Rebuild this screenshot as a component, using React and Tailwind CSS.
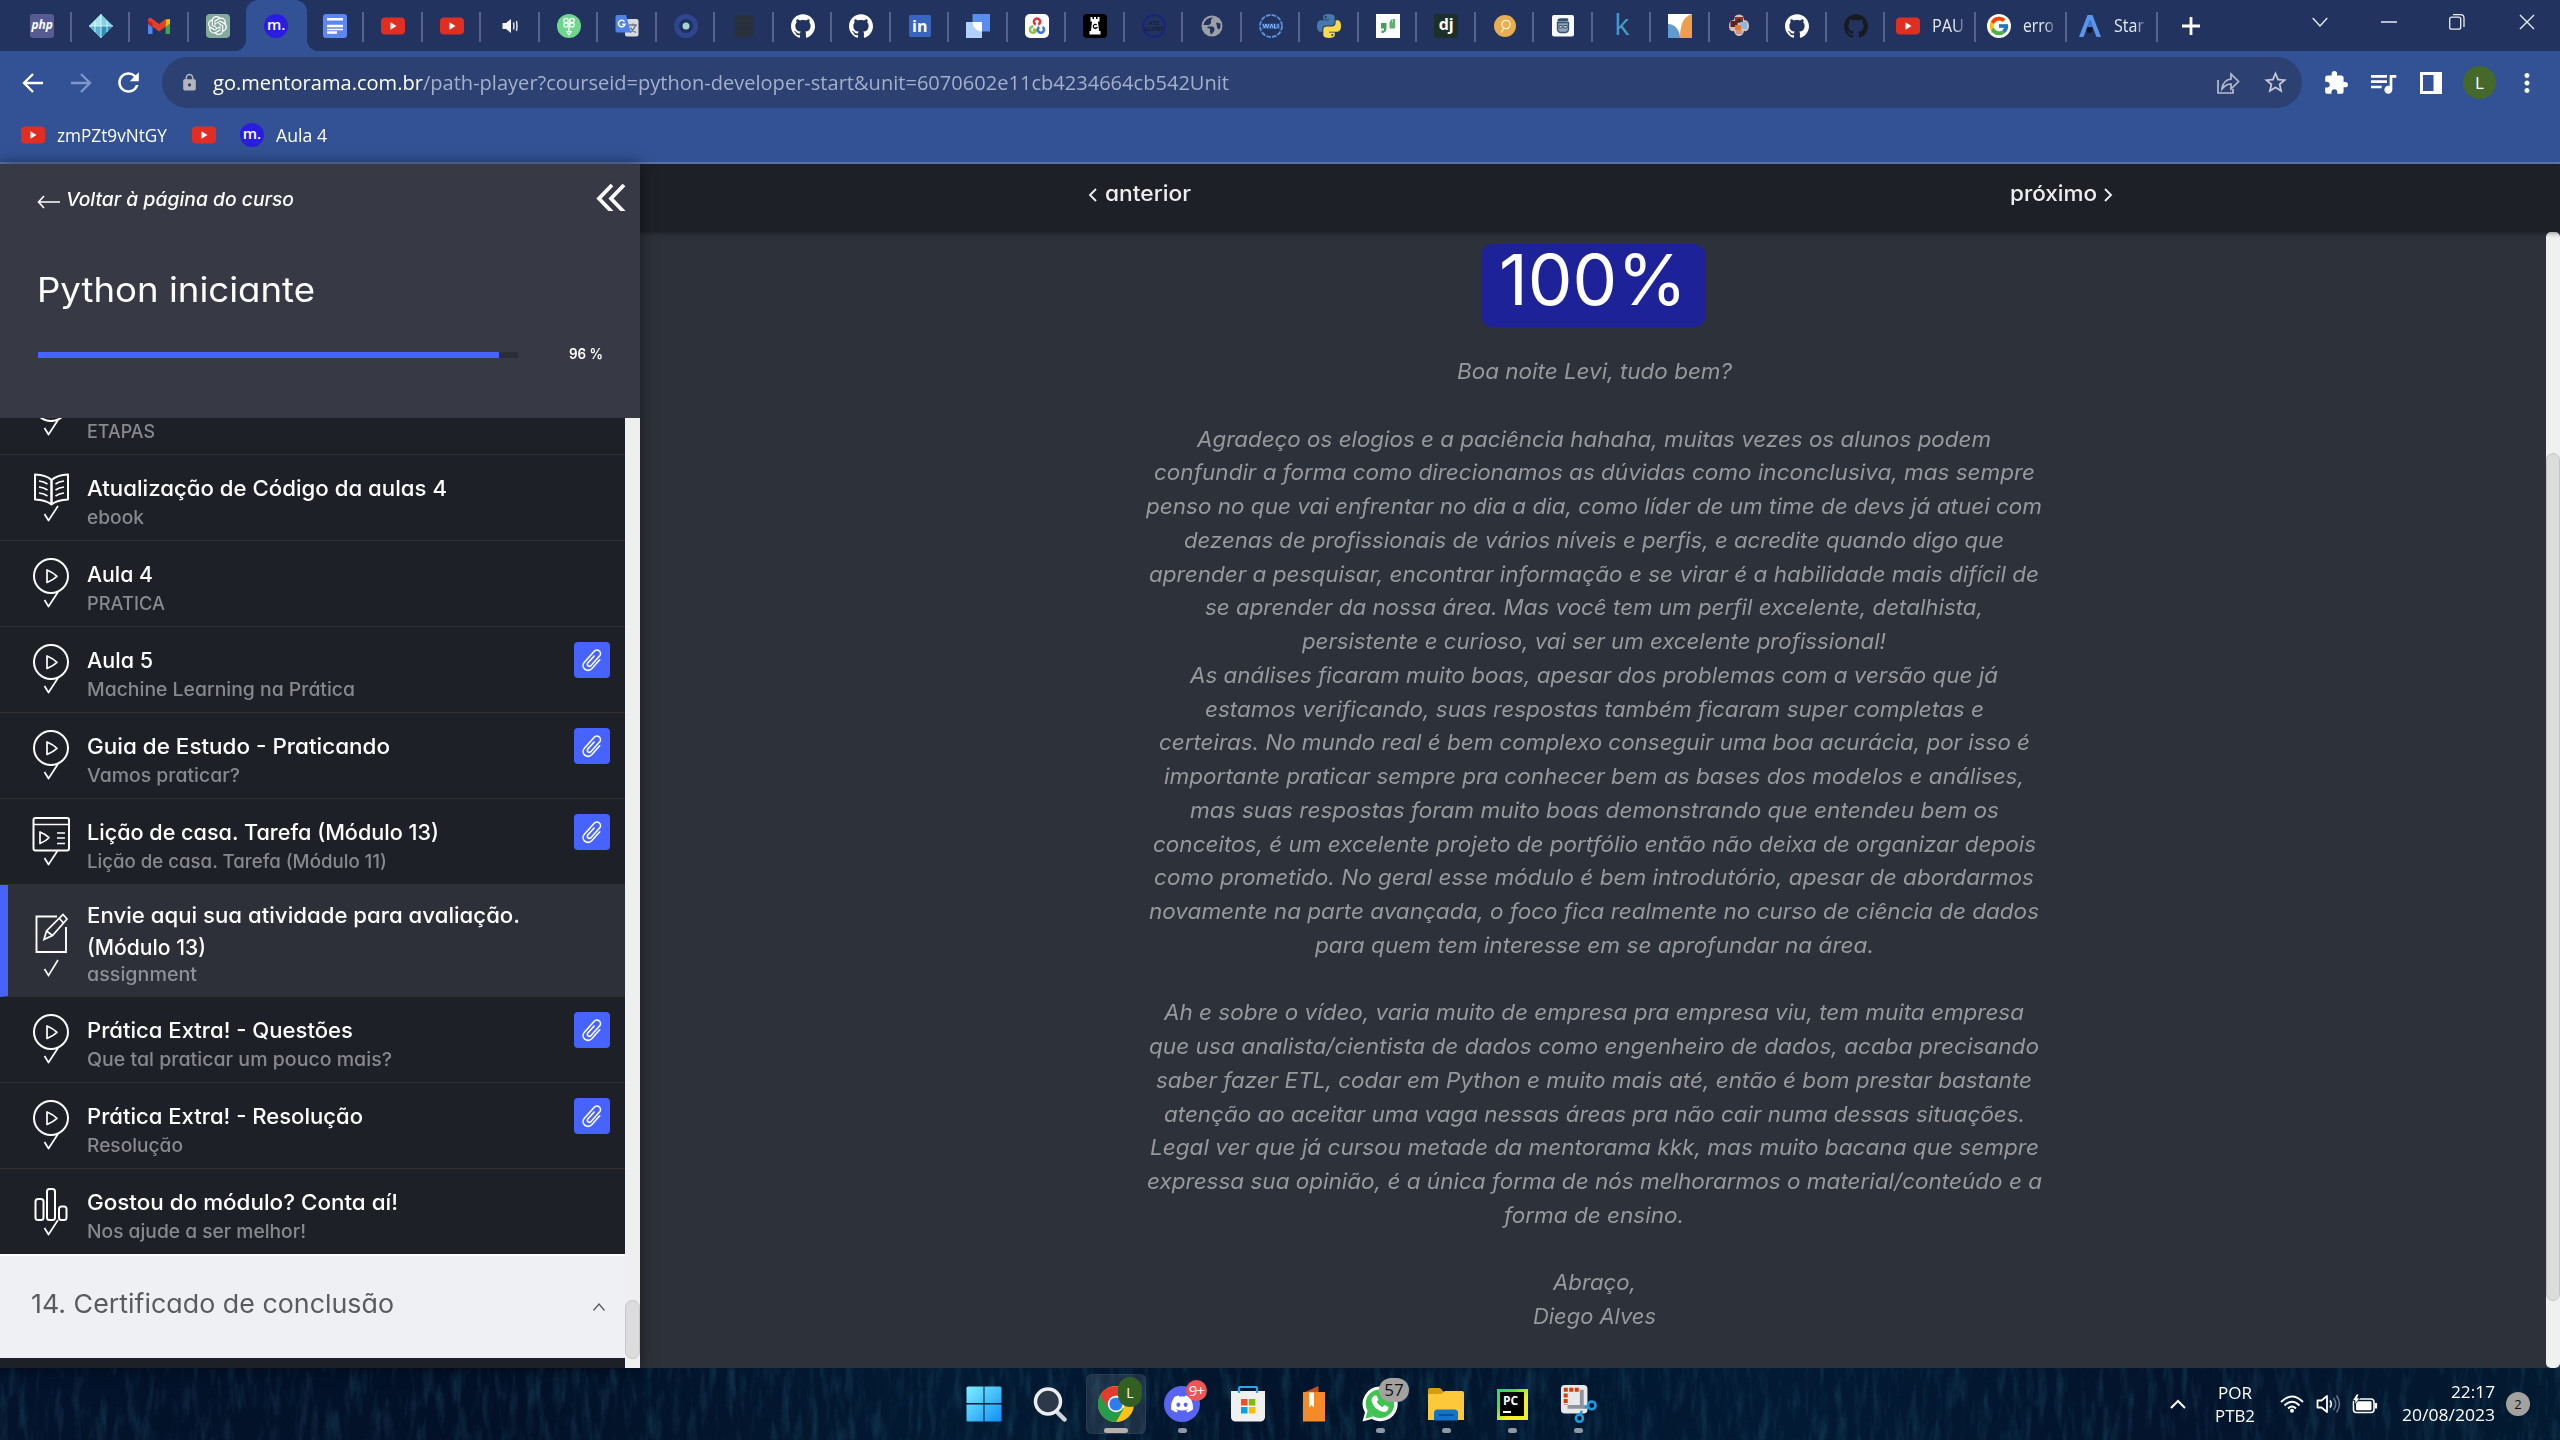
import React, { useLayoutEffect, useRef, useState } from 'react';
import { SiGithub, SiOpenai, SiDiscord } from 'react-icons/si';
import { FcGoogle } from 'react-icons/fc';
import { MdExtension, MdQueueMusic, MdStarBorder, MdLock, MdMoreVert, MdRefresh } from 'react-icons/md';

/* One line of text stretched horizontally to fill a set width. */
function Fit({ w, className = '', children }) {
  const ref = useRef(null);
  const [k, setK] = useState(1);
  useLayoutEffect(() => {
    const el = ref.current;
    el.style.transform = 'none';
    const next = w / el.getBoundingClientRect().width;
    el.style.transform = `scaleX(${next})`;
    setK(next);
  }, [w]);
  return (
    <span className={`block shrink-0 whitespace-nowrap ${className}`} style={{ width: `${w}px` }}>
      <span ref={ref} className="inline-block origin-left align-top" style={{ transform: `scaleX(${k})` }}>
        {children}
      </span>
    </span>
  );
}

function YouTube() {
  return (
    <svg viewBox="0 0 24 24" className="size-6">
      <rect x="0" y="3.5" width="24" height="17" rx="4" fill="#e02f22" />
      <path d="M9.5 8.3v7.4l6-3.7z" fill="#fff" />
    </svg>
  );
}

function MLogo() {
  return (
    <span className="flex size-6 items-center justify-center rounded-full bg-[#2a1de0] font-['Open_Sans',sans-serif] text-[15px] leading-none font-semibold text-white">
      <span className="-mt-[3px]">m.</span>
    </span>
  );
}

const PYTHON_TOP = 'M11.9 0C5.8 0 6.2 2.7 6.2 2.7v2.8H12v.8H3.9S0 5.9 0 12s3.400 5.800 3.400 5.800h2v-2.800s-.1-3.400 3.400-3.400h5.700s3.200 0 3.200-3.200V3.200S18.200 0 11.900 0zM8.700 1.900a1 1 0 1 1 0 2.100 1 1 0 0 1 0-2.100z';

const FAVICONS = [
  <span className="flex size-6 items-center justify-center rounded-[3px] bg-[#565b91] font-['Open_Sans',sans-serif] text-[12px] font-bold text-white italic"><span className="-mt-0.5">php</span></span>,
  <svg viewBox="0 0 24 24" className="size-6">
    <path d="M12 0L24 12 12 24 0 12z" fill="#7fd0e4" />
    <path d="M12 0v24L0 12z" fill="#a8e4ee" />
    <path d="M12 12L24 12 12 24z" fill="#2f8fb5" />
    <path d="M0 12h12v12z" fill="#58b3cf" />
    <path d="M12 0v24M0 12h24M6 7v11M18 7v11" stroke="#e9fbff" strokeWidth=".8" fill="none" />
  </svg>,
  <svg viewBox="0 0 24 24" className="size-6">
    <path d="M1 6v14h4.500V10z" fill="#4c86f0" />
    <path d="M23 6v14h-4.500V10z" fill="#34a853" />
    <path d="M18.500 5.500L23 5v4.500l-4.500 3.500z" fill="#fbbc04" />
    <path d="M1 5.500Q2 2.500 5.500 5L12 10l6.500-5v8L12 17.500 1 9z" fill="#e0412f" />
    <path d="M1 6.500v3.500l4.500 3.500V9z" fill="#c5221f" />
  </svg>,
  <span className="flex size-6 items-center justify-center rounded-[4px] bg-[#84a99d]"><SiOpenai className="size-[19px] text-white" /></span>,
  <MLogo />,
  <svg viewBox="0 0 24 24" className="size-6">
    <rect width="24" height="24" rx="3" fill="#5f86ef" />
    <path d="M4 5.200h16M4 12h16M4 18.500h10" stroke="#fff" strokeWidth="2.600" />
    <path d="M4 15.500h16" stroke="#fff" strokeWidth="1.500" />
  </svg>,
  <YouTube />,
  <YouTube />,
  <svg viewBox="0 0 24 24" className="size-6">
    <path d="M4.500 9h3.500l5-4v14l-5-4H4.500z" fill="#f5f6f8" />
    <path d="M15.500 8.500q1 3.500 0 7M18.500 7q1 5 0 10" stroke="#dfe3ea" strokeWidth="1.500" fill="none" />
  </svg>,
  <svg viewBox="0 0 24 24" className="size-6">
    <circle cx="12" cy="12" r="12" fill="#6fd68d" />
    <g stroke="#fff" fill="none" strokeWidth="1.200">
      <circle cx="9" cy="6.500" r="2.200" /><circle cx="15" cy="6.500" r="2.200" />
      <circle cx="9" cy="11" r="2.200" /><circle cx="15" cy="11" r="2.200" />
      <path d="M12 8v10M10 17.500h4L12 21z" />
    </g>
  </svg>,
  <svg viewBox="0 0 24 24" className="size-6">
    <rect x="10" y="5" width="13.500" height="17.500" rx="2" fill="#d9dade" />
    <path d="M14 11h8M18 9.500v1.500M20.500 11q-1.500 5-5.500 7.500M15.500 13.500q2 4 5.500 5" stroke="#6c7a85" strokeWidth="1.300" fill="none" />
    <path d="M2 1h9l5 17.500H2.500a2 2 0 0 1-2-2v-13.500A2 2 0 0 1 2 1z" fill="#4e82ea" />
    <path d="M9.500 7.700A3.300 3.300 0 1 0 10 10.200H7" stroke="#fff" strokeWidth="1.500" fill="none" />
  </svg>,
  <svg viewBox="0 0 24 24" className="size-6">
    <circle cx="12" cy="12" r="12" fill="#2f4590" /><circle cx="12" cy="12" r="7" fill="#20305d" /><circle cx="12" cy="12" r="3.500" fill="#9fd6d0" />
  </svg>,
  <svg viewBox="0 0 24 24" className="size-6">
    <g fill="#2a303a"><rect x="2.500" y="1.500" width="19" height="5" rx="2.500" /><rect x="2.500" y="7" width="19" height="5" rx="2.500" /><rect x="2.500" y="12.500" width="19" height="5" rx="2.500" /><rect x="2.500" y="18" width="19" height="5" rx="2.500" /></g>
  </svg>,
  <SiGithub className="size-6 text-white" />,
  <SiGithub className="size-6 text-white" />,
  <span className="flex size-[22px] items-center justify-center rounded-[2px] bg-[#3866bd] font-['Open_Sans',sans-serif] text-[16px] leading-none font-bold text-white">in</span>,
  <svg viewBox="0 0 24 24" className="size-6">
    <rect x="6.500" y="0" width="17.500" height="17.500" fill="#5b8def" /><rect x="0" y="8" width="16" height="16" fill="#b0d2fa" /><path d="M6.500 8H16v9.500A9.500 9.500 0 0 1 6.500 8z" fill="#fff" />
  </svg>,
  <svg viewBox="0 0 24 24" className="size-6">
    <rect width="24" height="24" rx="5" fill="#fff" />
    <g fill="none" strokeWidth="2.500">
      <path d="M10.700 10.500a3.100 3.100 0 1 1 2.600 0" stroke="#e0303f" />
      <path d="M8.300 12.500a3.100 3.100 0 1 0 2.800 3.300H8" stroke="#8bc34a" />
      <path d="M14.300 13a3.100 3.100 0 1 0 3.200 0" stroke="#3f6fe8" />
    </g>
  </svg>,
  <svg viewBox="0 0 24 24" className="size-6">
    <rect width="24" height="24" rx="4" fill="#000" />
    <path d="M7.500 3h2v2h1.500V3h2v2h1.500V3h2v4.500h-1.500l1 9.500h1.500v3.500h-11V17H8l1-9.500H7.500z" fill="#fff" />
    <path d="M13.700 11a2 2 0 1 0 .3 2.500h-1.600" stroke="#000" strokeWidth="1.200" fill="none" />
  </svg>,
  <span className="flex size-6 flex-col items-center justify-center rounded-full border-2 border-[#1b2479] font-['Open_Sans',sans-serif] text-[6px] leading-[6px] font-semibold text-[#131b33]"><span>ATS</span><span>GLOBE</span></span>,
  <svg viewBox="0 0 24 24" className="size-6">
    <circle cx="12" cy="12" r="10.500" fill="#9aa0a6" />
    <path d="M13.500 3.500q-3 1.500-2.500 4t-2.500 3.500H3.500a9 9 0 0 1 10-7.500zM8 12.500h4.500q2.500 1 2 3.500t-3.500 4.500q-1.500-2.500-1-4.500t-3-2zM16 8.500l4.500 1q.5 3-1 6-3-1-2.500-3z" fill="#22335f" />
  </svg>,
  <svg viewBox="0 0 24 24" className="size-6">
    <circle cx="12" cy="12" r="11" fill="none" stroke="#5c94dc" strokeWidth="1.800" strokeDasharray="4.500 1.300" />
    <path d="M3 9.500h18v5.500H3z" fill="#2f569c" />
    <path d="M4 10l1.500 4 1.500-4 1.500 4 1.500-4M11 14l1.500-4 1.500 4M15.500 10v4h2M19 10v4" stroke="#8fbcf5" strokeWidth="1" fill="none" />
  </svg>,
  <svg viewBox="0 0 24 24" className="size-6">
    <path d={PYTHON_TOP} fill="#4579ab" />
    <path d={PYTHON_TOP} fill="#f7dc50" transform="rotate(180 12 12)" />
  </svg>,
  <svg viewBox="0 0 24 24" className="size-6">
    <rect width="24" height="24" fill="#fff" />
    <path d="M5 9h5.500v5q0 4-3.500 5H5.500v-2.500H8V14.500H5z" fill="#4a9c5c" />
    <path d="M19 14.500h-5.500v-5q0-3.500 3-4.500v3.500H17V5h2z" fill="#5fb070" />
  </svg>,
  <span className="flex size-6 items-center justify-center rounded-[3px] bg-[#1b3029] font-['Open_Sans',sans-serif] text-[16px] leading-none font-bold text-white"><span className="-mt-1">dj</span></span>,
  <svg viewBox="0 0 24 24" className="size-6">
    <circle cx="12" cy="12" r="11" fill="#e6ae4c" />
    <circle cx="13" cy="10.500" r="4.200" fill="none" stroke="#fdf3df" strokeWidth="1.200" /><path d="M11 14.500L8 18.500" stroke="#fdf3df" strokeWidth="1.200" />
  </svg>,
  <svg viewBox="0 0 24 24" className="size-6">
    <rect x="1" y="1" width="22" height="21.500" rx="2" fill="#f7f9fb" />
    <path d="M6.500 5.500l2-1.200h8l1 1.200-1 2h-10z" fill="#35536f" />
    <path d="M6.500 8.500h11v7q-.5 3-3 3h-5q-2.500 0-3-3z" fill="#8fa5b8" stroke="#35536f" strokeWidth="1.300" />
    <path d="M8 11.500h3.200v2.500H8zM12.800 11.500H16v2.500h-3.200z" stroke="#2d4a68" strokeWidth=".9" fill="#d5e0ea" />
  </svg>,
  <span className="font-['Open_Sans',sans-serif] text-[29px] leading-6 text-[#4a9ac4]"><span className="relative -top-0.5">k</span></span>,
  <svg viewBox="0 0 24 24" className="size-6">
    <rect width="24" height="24" fill="#fff" /><path d="M0 10a12 14 0 0 1 12 14H0z" fill="#5f9bd0" /><path d="M24 0v24H12Q12 3 24 0z" fill="#eb9f4a" />
  </svg>,
  <svg viewBox="0 0 24 24" className="size-6">
    <path d="M8 2q4-3 8 0l1 4q5 0 5 6t-5 5q-1 5-5 5t-5-5q-5 1-5-5t5-6z" fill="#d8c0b4" />
    <rect x="8" y="3" width="8" height="6" fill="#a02c2c" /><rect x="3.500" y="7" width="7" height="6" fill="#5c2326" /><rect x="13" y="8" width="7" height="7" fill="#8fb8e0" /><rect x="8" y="11" width="6" height="5" fill="#e07b35" /><rect x="9" y="16" width="6" height="4" fill="#c9988a" /><rect x="10" y="5" width="4" height="3" fill="#1f3c2c" />
  </svg>,
  <SiGithub className="size-6 text-white" />,
  <SiGithub className="size-6 text-[#161b22]" />,
];

const SEP = 'absolute top-3 right-0 h-[30px] w-0.5 bg-[#56648a]';

function Tabs() {
  return (
    <div className="flex h-[51px] bg-[#22335f] pl-[13px] font-['Open_Sans',sans-serif]">
      {FAVICONS.map((icon, i) => (
        <div key={i} className="relative flex w-[58.5px] shrink-0 items-center justify-center">
          {i === 4 && (
            <div className="absolute inset-x-[-1px] inset-y-0 rounded-t-[12px] bg-[#325295]">
              <div className="absolute bottom-0 -left-3 size-3 bg-[radial-gradient(circle_at_0_0,#22335f_12px,#325295_12.5px)]" />
              <div className="absolute -right-3 bottom-0 size-3 bg-[radial-gradient(circle_at_100%_0,#22335f_12px,#325295_12.5px)]" />
            </div>
          )}
          <div className="relative flex">{icon}</div>
          {i !== 3 && i !== 4 && <div className={SEP} />}
        </div>
      ))}
      {[
        [<YouTube key="y" />, 'PAU', 32],
        [<span key="g" className="flex size-6 items-center justify-center rounded-full bg-white"><FcGoogle className="size-[22px]" /></span>, 'erro', 31],
        [<svg key="a" viewBox="0 0 24 24" className="size-6"><path d="M9.500 1h5L23 23h-4.500L12 6 5.500 23H1z" fill="#5b95ea" /><path d="M12 6l2.500 7h-5z" fill="#3f78dc" /><circle cx="11.500" cy="16" r="3" fill="#101828" /></svg>, 'Star', 30],
      ].map(([icon, label, w]) => (
        <div key={label} className="relative flex w-[91px] shrink-0 items-center gap-3 pl-[11px] text-[18px] text-[#e6eaf3]">
          {icon}
          <div className="[mask-image:linear-gradient(90deg,#000_70%,rgba(0,0,0,0.3))]"><Fit w={w}>{label}</Fit></div>
          <div className={SEP} />
        </div>
      ))}
      <div className="flex w-[66px] items-center justify-center">
        <svg viewBox="0 0 18 18" className="size-[18px]"><path d="M9 0v18M0 9h18" stroke="#fff" strokeWidth="2.800" /></svg>
      </div>
      <div className="ml-auto flex h-11 items-center pr-[25px] text-[#e9edf5]">
        <svg viewBox="0 0 16 10" className="h-[10px] w-4"><path d="M.7 1L8 9l7.300-8" stroke="currentColor" strokeWidth="1.300" fill="none" /></svg>
        <svg viewBox="0 0 16 16" className="ml-[53px] size-4"><path d="M0 8h16" stroke="currentColor" strokeWidth="1.500" /></svg>
        <svg viewBox="0 0 18 18" className="ml-[51px] size-[18px]"><rect x="1.700" y="4.200" width="11" height="12" rx="2" stroke="currentColor" strokeWidth="1.300" fill="none" /><path d="M5 1.700h7.500q3.500 0 3.500 3.500V14" stroke="currentColor" strokeWidth="1.300" fill="none" /></svg>
        <svg viewBox="0 0 16 16" className="ml-[53px] size-[16px]"><path d="M1 1l14 14M15 1L1 15" stroke="currentColor" strokeWidth="1.400" /></svg>
      </div>
    </div>
  );
}

function Toolbar() {
  return (
    <div className="flex h-[63px] items-center bg-[#325295] pl-[21px] font-['Open_Sans',sans-serif]">
      <svg viewBox="0 0 24 24" className="size-6 text-white"><path d="M22 12H3M12 3l-9 9 9 9" stroke="currentColor" strokeWidth="2.400" fill="none" /></svg>
      <svg viewBox="0 0 24 24" className="ml-6 size-6 text-[#7e96c8]"><path d="M2 12h19M12 3l9 9-9 9" stroke="currentColor" strokeWidth="2.400" fill="none" /></svg>
      <MdRefresh className="ml-[20px] size-[31px] text-white" />
      <div className="ml-[18px] flex h-[51px] w-[2140px] items-center rounded-full bg-[#2c4172] pl-[18px]">
        <MdLock className="size-[19px] text-[#b3b6bd]" />
        <div className="ml-[14px] text-[20px] leading-7 text-[#a4b0ca]">
          <Fit w={1016}>
            <span className="text-white">go.mentorama.com.br</span>/path-player?courseid=python-developer-start&amp;unit=6070602e11cb4234664cb542Unit
          </Fit>
        </div>
        <svg viewBox="0 0 24 24" className="mr-[22px] ml-auto size-6 text-[#b6bccb]"><path d="M2 9v13h15v-4M6 18q1-9 9-10V3l7.500 7.500L15 18v-5q-5 0-9 5z" stroke="currentColor" strokeWidth="1.700" fill="none" /></svg>
        <MdStarBorder className="mr-[13px] size-[27px] text-[#c3c8d4]" />
      </div>
      <MdExtension className="ml-[21px] size-[26px] text-white" />
      <MdQueueMusic className="ml-[18px] size-[32px] text-white" />
      <svg viewBox="0 0 22 22" className="ml-[21px] size-[22px]"><path d="M1.500 1.500h19v19h-19z" stroke="#fff" strokeWidth="3" fill="none" /><path d="M13.500 1h7v20h-7z" fill="#fff" /></svg>
      <span className="ml-[21px] flex size-[33px] items-center justify-center rounded-full bg-[#44692a] text-[17px] text-white">L</span>
      <MdMoreVert className="ml-[16px] size-[30px] text-white" />
    </div>
  );
}

function Bookmarks() {
  return (
    <div className="flex h-[50px] items-center border-b-2 border-[#5a78b0] bg-[#325295] pb-[6px] pl-[21px] font-['Open_Sans',sans-serif] text-[18px] leading-6 text-white">
      <YouTube />
      <Fit w={110} className="ml-3">zmPZt9vNtGY</Fit>
      <div className="ml-[25px]"><YouTube /></div>
      <div className="ml-6"><MLogo /></div>
      <Fit w={51} className="ml-3">Aula 4</Fit>
    </div>
  );
}

const CHECK = <path d="M15.500 59l4 6.500L29 51" strokeWidth="1.700" />;

const ITEM_ICONS = {
  play: (
    <>
      <circle cx="22" cy="35" r="17" />
      <path d="M18 29v12.500q6-2.500 10-6.200-4-3.800-10-6.300z" strokeWidth="1.700" />
      {CHECK}
    </>
  ),
  book: (
    <>
      <path d="M22.500 25q-5-5-16.500-5.500v25q11 .5 16.500 5 5.500-4.500 16.500-5v-25Q28 20 22.500 25zv24" />
      <path d="M22.500 25v24" />
      <path d="M10 26q5 .5 8.500 3M10 32q5 .5 8.500 3M10 38q5 .5 8.500 3M35 26q-5 .5-8.500 3M35 32q-5 .5-8.500 3M35 38q-5 .5-8.500 3" strokeWidth="1.600" />
      {CHECK}
    </>
  ),
  lesson: (
    <>
      <rect x="4.500" y="19" width="35.500" height="32.500" rx="2" />
      <path d="M4.500 25.500H40" strokeWidth="1.600" />
      <path d="M11 33v11.500q6-2.500 9-5.800-3-3.200-9-5.700zM28 34h8M28 39h8M28 44.500h8" strokeWidth="1.700" />
      {CHECK}
    </>
  ),
  bars: (
    <>
      <rect x="6.500" y="30" width="8" height="21" rx="2.500" />
      <rect x="18" y="20" width="8" height="31" rx="2.500" />
      <rect x="30" y="37.500" width="7.500" height="13.500" rx="2.500" />
      {CHECK}
    </>
  ),
};

function ItemIcon({ kind }) {
  return (
    <svg viewBox="0 0 44 85" className="ml-[29px] h-[85px] w-11 shrink-0" fill="none" stroke="#fff" strokeWidth="2" strokeLinejoin="round">
      {ITEM_ICONS[kind]}
    </svg>
  );
}

function Clip() {
  return (
    <div className="mt-[15px] mr-[15px] ml-auto flex size-9 items-center justify-center rounded bg-[#4763ff]">
      <svg viewBox="-14 -14 28 28" className="size-[25px]" fill="none" stroke="#fff" strokeWidth="1.800" strokeLinecap="round">
        <path transform="rotate(42)" d="M5.500 -6V7.500A5.500 5.500 0 0 1 -5.500 7.500V-9A4 4 0 0 1 2.500 -9V6A2.300 2.300 0 0 1 -2 6V-5" />
      </svg>
    </div>
  );
}

function Item({ kind, title, tw, sub, sw, clip, first }) {
  return (
    <div className={`flex h-[86px] shrink-0 border-b border-[#313131] bg-[#1e2028] ${first ? '-mt-[49px]' : ''}`}>
      <ItemIcon kind={kind} />
      <div className="ml-[14px] flex flex-col pt-[17px]">
        <div className="h-8 text-[22px] leading-8 font-medium text-white">{title && <Fit w={tw}>{title}</Fit>}</div>
        <div className="text-[18.500px] leading-[26px] font-medium text-[#88898d]"><Fit w={sw}>{sub}</Fit></div>
      </div>
      {clip && <Clip />}
    </div>
  );
}

function Sidebar() {
  return (
    <aside className="relative z-10 flex w-[640px] shrink-0 flex-col shadow-[0_0_14px_rgba(0,0,0,0.5)]">
      <div className="h-[254px] shrink-0 bg-[#373a44]">
        <div className="flex h-[74px] items-center pl-[37px] text-white">
          <svg viewBox="0 0 23 14" className="mt-[2px] h-[14px] w-[23px]"><path d="M23 7H1.500M7 1L1.500 7 7 13" stroke="#fff" strokeWidth="1.600" fill="none" /></svg>
          <Fit w={228} className="-mt-[5px] ml-[6px] text-[18.500px] leading-6 font-medium italic">Voltar à página do curso</Fit>
          <svg viewBox="0 0 30 30" className="mr-[14px] ml-auto size-[30px] -translate-y-[5px]"><g transform="translate(0 2.500)"><path d="M16 1.500L3 15l13 13.500M28 1.500L15 15l13 13.500" stroke="#fff" strokeWidth="3.800" fill="none" /></g></svg>
        </div>
        <h1 className="mt-[29px] pl-[37px] text-[34px] leading-[46px] text-white"><Fit w={278}>Python iniciante</Fit></h1>
        <div className="mt-[33px] flex items-center pl-[38px]">
          <div className="h-1.5 w-[480px] bg-[#2b2d37]"><div className="h-full w-[461px] bg-[#4763ff]" /></div>
          <Fit w={34} className="-mt-0.5 ml-[51px] text-[14.500px] leading-5 font-semibold text-white">96 %</Fit>
        </div>
      </div>
      <div className="flex min-h-0 flex-1">
        <div className="flex w-[625px] flex-col overflow-hidden bg-[#1e2028]">
          <Item first kind="play" sub="ETAPAS" sw={68} />
          <Item kind="book" title="Atualização de Código da aulas 4" tw={360} sub="ebook" sw={57} />
          <Item kind="play" title="Aula 4" tw={66} sub="PRATICA" sw={78} />
          <Item kind="play" title="Aula 5" tw={66} sub="Machine Learning na Prática" sw={268} clip />
          <Item kind="play" title="Guia de Estudo - Praticando" tw={303} sub="Vamos praticar?" sw={153} clip />
          <Item kind="lesson" title="Lição de casa. Tarefa (Módulo 13)" tw={352} sub="Lição de casa. Tarefa (Módulo 11)" sw={300} clip />
          <div className="flex h-[112px] shrink-0 border-b border-l-8 border-b-[#313131] border-l-[#4763ff] bg-[#2d3039]">
            <svg viewBox="0 0 44 111" className="ml-[21px] h-[111px] w-11 shrink-0" fill="none" stroke="#fff" strokeWidth="1.900">
              <path d="M28 31.500H7.500V67H37V42" />
              <path d="M34 29.500l4 4.500-14.500 16.500-8.500 4 2.500-8.500zM30.500 33.500l4 4.500M17.500 46l6 4.500" strokeWidth="1.700" />
              <path d="M15.500 84l4 6.500L29 75" strokeWidth="1.700" />
            </svg>
            <div className="ml-[14px] flex flex-col pt-[14px] text-[22px] leading-8 font-medium text-white">
              <Fit w={433}>Envie aqui sua atividade para avaliação.</Fit>
              <Fit w={119}>(Módulo 13)</Fit>
              <div className="text-[18.500px] leading-[22px] text-[#8e9096]"><Fit w={110}>assignment</Fit></div>
            </div>
          </div>
          <Item kind="play" title="Prática Extra! - Questões" tw={266} sub="Que tal praticar um pouco mais?" sw={305} clip />
          <Item kind="play" title="Prática Extra! - Resolução" tw={276} sub="Resolução" sw={96} clip />
          <Item kind="bars" title="Gostou do módulo? Conta aí!" tw={311} sub="Nos ajude a ser melhor!" sw={219} />
          <div className="-mt-px flex h-[104px] shrink-0 items-center border-t-2 border-white bg-[#eff0f4] pr-5 pl-[31px] text-[26px] leading-9 text-[#5a5b5e]">
            <Fit w={363} className="-mt-[7px]">14. Certificado de conclusão</Fit>
            <svg viewBox="0 0 12 8" className="ml-auto h-2 w-3"><path d="M.5 7.500L6 1l5.500 6.500" stroke="#55565a" strokeWidth="1.200" fill="none" /></svg>
          </div>
        </div>
        <div className="flex w-[15px] flex-col justify-end bg-[#efefef] pb-[9px]">
          <div className="h-[59px] rounded-full border border-[#c6c6c6] bg-[#dcdcdc]" />
        </div>
      </div>
    </aside>
  );
}

const LINES = [
  ['Boa noite Levi, tudo bem?', 275],
  null,
  ['Agradeço os elogios e a paciência hahaha, muitas vezes os alunos podem', 794],
  ['confundir a forma como direcionamos as dúvidas como inconclusiva, mas sempre', 881],
  ['penso no que vai enfrentar no dia a dia, como líder de um time de devs já atuei com', 896],
  ['dezenas de profissionais de vários níveis e perfis, e acredite quando digo que', 820],
  ['aprender a pesquisar, encontrar informação e se virar é a habilidade mais difícil de', 890],
  ['se aprender da nossa área. Mas você tem um perfil excelente, detalhista,', 778],
  ['persistente e curioso, vai ser um excelente profissional!', 584],
  ['As análises ficaram muito boas, apesar dos problemas com a versão que já', 808],
  ['estamos verificando, suas respostas também ficaram super completas e', 779],
  ['certeiras. No mundo real é bem complexo conseguir uma boa acurácia, por isso é', 871],
  ['importante praticar sempre pra conhecer bem as bases dos modelos e análises,', 860],
  ['mas suas respostas foram muito boas demonstrando que entendeu bem os', 809],
  ['conceitos, é um excelente projeto de portfólio então não deixa de organizar depois', 883],
  ['como prometido. No geral esse módulo é bem introdutório, apesar de abordarmos', 880],
  ['novamente na parte avançada, o foco fica realmente no curso de ciência de dados', 890],
  ['para quem tem interesse em se aprofundar na área.', 559],
  null,
  ['Ah e sobre o vídeo, varia muito de empresa pra empresa viu, tem muita empresa', 860],
  ['que usa analista/cientista de dados como engenheiro de dados, acaba precisando', 890],
  ['saber fazer ETL, codar em Python e muito mais até, então é bom prestar bastante', 876],
  ['atenção ao aceitar uma vaga nessas áreas pra não cair numa dessas situações.', 861],
  ['Legal ver que já cursou metade da mentorama kkk, mas muito bacana que sempre', 889],
  ['expressa sua opinião, é a única forma de nós melhorarmos o material/conteúdo e a', 895],
  ['forma de ensino.', 180],
  null,
  ['Abraço,', 83],
  ['Diego Alves', 123],
];

function Main() {
  return (
    <main className="flex min-w-0 flex-1 flex-col bg-[#2d3139]">
      <nav className="relative flex h-[68px] shrink-0 items-start justify-between bg-[#1e2028] pt-[14px] pr-[447px] pl-[448px] text-[21px] leading-8 font-medium text-[#eeeef0] shadow-[0_2px_4px_rgba(0,0,0,0.3)]">
        <div className="flex items-center gap-[8px]">
          <svg viewBox="0 0 9 14" className="mt-0.5 h-[14px] w-[9px]"><path d="M8 1L2 7l6 6" stroke="currentColor" strokeWidth="1.900" fill="none" /></svg>
          <Fit w={86}>anterior</Fit>
        </div>
        <div className="flex items-center gap-[7px]">
          <Fit w={87}>próximo</Fit>
          <svg viewBox="0 0 9 14" className="mt-0.5 h-[14px] w-[9px]"><path d="M1 1l6 6-6 6" stroke="currentColor" strokeWidth="1.900" fill="none" /></svg>
        </div>
      </nav>
      <div className="flex min-h-0 flex-1">
        <div className="flex flex-1 flex-col items-center pt-[12px]">
          <div className="flex h-[83px] w-[225px] justify-center rounded-[12px] bg-[#1e2299] text-[70px] leading-[72px] text-white">
            <Fit w={188}>100%</Fit>
          </div>
          <div className="mt-[28px] flex flex-col items-center pl-0.5 text-[21.500px] leading-[33.760px] text-[#98999c] italic">
            {LINES.map((l, i) => (
              <div key={i} className="h-[33.760px]">{l && <Fit w={l[1]}>{l[0]}</Fit>}</div>
            ))}
          </div>
        </div>
        <div className="w-[14px] overflow-hidden rounded-[5px] bg-[#f0f0f0] pt-[221px]">
          <div className="h-[848px] rounded-[7px] border border-[#c4c4c4] bg-[#dcdcdc]" />
        </div>
      </div>
    </main>
  );
}

const TASKS = [
  { icon: <svg viewBox="0 0 36 36" className="size-9"><defs><linearGradient id="win" x1="0" y1="0" x2="1" y2="1"><stop stopColor="#7ff0ff" /><stop offset="1" stopColor="#0d8ef8" /></linearGradient></defs><path d="M2 .5h15.500V17H.5V2A1.500 1.500 0 0 1 2 .5zM18.500.5H34A1.500 1.500 0 0 1 35.500 2v15h-17zM.5 18.500h17v17H2A1.500 1.500 0 0 1 .5 34zM18.500 18.500h17V34a1.500 1.500 0 0 1-1.500 1.500H18.500z" fill="url(#win)" /></svg> },
  { icon: <svg viewBox="0 0 36 36" className="size-9"><path d="M25 26l7.500 7.500" stroke="#d0d3d8" strokeWidth="4.500" strokeLinecap="round" /><circle cx="16" cy="15.500" r="12.500" fill="#2d394b" stroke="#eceef0" strokeWidth="3.500" /></svg> },
  { active: true, icon: <svg viewBox="0 0 48 48" className="size-9"><circle cx="24" cy="24" r="24" fill="#fbc116" /><path d="M24 24L3.200 12A24 24 0 0 0 24 48l10.400-18z" fill="#269b4a" /><path d="M3.200 12A24 24 0 0 1 44.800 13H24L13.600 30z" fill="#e33b2e" /><circle cx="24" cy="24" r="11" fill="#fff" /><circle cx="24" cy="24" r="8.800" fill="#2f7cf0" /></svg>, badge: <span className="absolute -top-[9px] -right-[8px] flex h-[30px] w-6 items-center justify-center rounded-full bg-[#336020] text-[14px] text-white">L</span> },
  { dot: true, icon: <span className="flex size-9 items-center justify-center rounded-full bg-[#5865f2]"><SiDiscord className="size-[22px] text-white" /></span>, badge: <span className="absolute -top-[6px] -right-[7px] flex size-[21px] items-center justify-center rounded-full bg-[#f05454] text-[15px] leading-none tracking-tighter text-white">9+</span> },
  { icon: <svg viewBox="0 0 36 36" className="size-9"><path d="M9 7V2.500A1.500 1.500 0 0 1 10.500 1h15A1.500 1.500 0 0 1 27 2.500V7" stroke="#28a8ea" strokeWidth="2.200" fill="none" /><path d="M1 5h34v26a4.500 4.500 0 0 1-4.500 4.500h-25A4.500 4.500 0 0 1 1 31z" fill="#f0f0f1" /><path d="M9 7V5M27 7V5" stroke="#28a8ea" strokeWidth="2.200" /><path d="M11 13h6.500v6.500H11z" fill="#f25022" /><path d="M18.800 13h6.500v6.500h-6.500z" fill="#7fba00" /><path d="M11 21h6.500v6.500H11z" fill="#00a4ef" /><path d="M18.800 21h6.500v6.500h-6.500z" fill="#ffb900" /></svg> },
  { icon: <svg viewBox="0 0 36 36" className="size-9"><path d="M8 6.500L22.500 0v6.500z" fill="#c4501c" /><path d="M7 6h22v29.500H7z" fill="#f58a28" /><path d="M13 6.500h5V22l-2.500-3-2.500 3z" fill="#fff" /></svg> },
  { dot: true, icon: <svg viewBox="0 0 36 36" className="size-9"><path d="M18 .5a17.300 17.300 0 0 0-15 26L.5 35.500l9.300-2.400A17.400 17.400 0 1 0 18 .5z" fill="#fff" /><circle cx="18" cy="17.700" r="14.300" fill="#3fc351" /><path d="M3.500 32.500l2-7.500 5.500 5.600z" fill="#3fc351" /><path d="M12.500 9.500l2.300.3 1.700 4-1.700 2.200q2 3.700 5.700 5.300l2-2.300 4 2q.3 4.500-4.500 5Q11.500 24 9.500 14.500q0-3.500 3-5z" fill="#fff" /></svg>, badge: <span className="absolute -top-[8px] -right-[11px] flex h-6 w-[30px] items-center justify-center rounded-full bg-[#a3a29e] text-[17px] text-[#111]">57</span> },
  { dot: true, icon: <svg viewBox="0 0 36 36" className="size-9"><path d="M0 4a2 2 0 0 1 2-2h10l4 4v4H0z" fill="#dd9a10" /><path d="M0 8h13l4-3h17a2 2 0 0 1 2 2v27H0z" fill="#fdc93a" /><path d="M6 34.500V27a3.500 3.500 0 0 1 3.500-3.500h17A3.500 3.500 0 0 1 30 27v7.500z" fill="#1273c8" /><path d="M10.500 29h15" stroke="#0c4f93" strokeWidth="1.800" /></svg> },
  { dot: true, icon: <span className="flex size-[31px] items-center justify-center bg-[linear-gradient(135deg,#21d789,#4be22f_30%,#f5ee2b_60%,#e8f02a)]"><span className="relative flex size-[24px] justify-start bg-black pt-px pl-[3px] font-['Open_Sans',sans-serif] text-[12px] leading-[15px] font-bold text-white">PC<span className="absolute bottom-[3px] left-[3px] h-0.5 w-2 bg-white" /></span></span> },
  { dot: true, icon: <svg viewBox="0 0 38 38" className="h-9 w-9 overflow-visible"><rect x="1" y="-1" width="28" height="30" rx="4" fill="#e6e8eb" /><path d="M4 4h16" stroke="#d83b01" strokeWidth="4.200" strokeDasharray="4.200 1.600" /><path d="M6 8v12" stroke="#d83b01" strokeWidth="4.200" strokeDasharray="4.200 1.600" /><path d="M23 4v19M8 22h22" stroke="#8d949c" strokeWidth="4" /><circle cx="33.500" cy="20.500" r="4" fill="none" stroke="#1b9be0" strokeWidth="2.800" /><circle cx="20.500" cy="34" r="3.700" fill="none" stroke="#1b9be0" strokeWidth="2.800" /><path d="M21.500 30l1.500-4M29 22l-3 .5" stroke="#1b9be0" strokeWidth="2.500" /></svg> },
];

function Taskbar() {
  return (
    <footer className="relative flex h-[72px] overflow-hidden bg-[linear-gradient(90deg,#03132b,#021127_20%,#031a33_38%,#02142b_50%,#031a34_70%,#03132b_85%,#031a31)] font-['Open_Sans',sans-serif]">
      <svg className="absolute inset-0 h-full w-full opacity-20">
        <filter id="grain" x="0" y="0" width="100%" height="100%">
          <feTurbulence type="fractalNoise" baseFrequency="0.110 0.025" numOctaves="5" seed="8" />
          <feColorMatrix values="0 0 0 0 0.050  0 0 0 0 0.280  0 0 0 0 0.420  0 2.600 0 0 -1.200" />
        </filter>
        <rect width="100%" height="100%" filter="url(#grain)" />
      </svg>
      <div className="relative flex pl-[951px]">
        {TASKS.map((t, i) => (
          <div key={i} className="relative flex w-[66px] items-center justify-center">
            {t.active && <div className="absolute inset-x-[3px] top-[6px] h-[60px] rounded-md border border-white/5 bg-white/10" />}
            <div className="relative flex">{t.icon}{t.badge}</div>
            {t.active && <div className="absolute bottom-[7px] h-[5px] w-6 rounded-full bg-[#b5b0aa]" />}
            {t.dot && <div className="absolute bottom-[7px] h-[5px] w-[9px] rounded-full bg-[#8e98a3]" />}
          </div>
        ))}
      </div>
      <div className="relative ml-auto flex items-center pr-[30px] text-[16px] leading-[23px] text-white">
        <svg viewBox="0 0 16 10" className="h-[10px] w-4"><path d="M1 9l7-7 7 7" stroke="#fff" strokeWidth="2" fill="none" /></svg>
        <div className="mt-px ml-[28px] flex w-[42px] flex-col items-center"><Fit w={34}>POR</Fit><Fit w={40}>PTB2</Fit></div>
        <svg viewBox="0 0 24 18" className="ml-[24px] h-[18px] w-6"><g stroke="#fff" strokeWidth="1.800" fill="none"><path d="M1 7q11-11 22 0M4.500 10.500q7.500-7.500 15 0M8 13.500q4-4 8 0" /></g><circle cx="12" cy="15.700" r="2" fill="#fff" /></svg>
        <svg viewBox="0 0 26 20" className="ml-[12px] h-5 w-[26px]"><path d="M1.500 6.500h4L11 2v16l-5.500-4.500h-4z" stroke="#fff" strokeWidth="1.800" fill="none" strokeLinejoin="round" /><path d="M14 6.500q2.500 3.500 0 7" stroke="#fff" strokeWidth="1.600" fill="none" /><path d="M17.500 4q4.500 6 0 12M20.500 1.500q6 8.500 0 17" stroke="#66788d" strokeWidth="1.500" fill="none" /></svg>
        <svg viewBox="0 0 26 20" className="ml-[10px] h-5 w-[26px]"><rect x="1.500" y="5" width="20.500" height="13.500" rx="3" stroke="#fff" strokeWidth="1.600" fill="none" /><rect x="4" y="7.300" width="15.500" height="9" rx="1" fill="#fff" /><path d="M24 9v5.500" stroke="#fff" strokeWidth="2.200" /><path d="M4.500 0L.5 6.500H3L2.500 11 8 4H5.500L7 0z" fill="#fff" stroke="#03182f" strokeWidth=".8" /></svg>
        <div className="ml-[24px] flex w-[93px] flex-col items-end"><Fit w={44}>22:17</Fit><Fit w={93}>20/08/2023</Fit></div>
        <span className="ml-[11px] flex size-6 items-center justify-center rounded-full bg-[#a3a29e] text-[13px] text-[#111]">2</span>
      </div>
    </footer>
  );
}

export default function App() {
  return (
    <div className="flex h-[1440px] w-[2560px] flex-col overflow-hidden bg-[#1e2028] font-['Inter',sans-serif] [font-feature-settings:'cv11']">
      <Tabs />
      <Toolbar />
      <Bookmarks />
      <div className="flex h-[1204px] shrink-0">
        <Sidebar />
        <Main />
      </div>
      <Taskbar />
    </div>
  );
}
